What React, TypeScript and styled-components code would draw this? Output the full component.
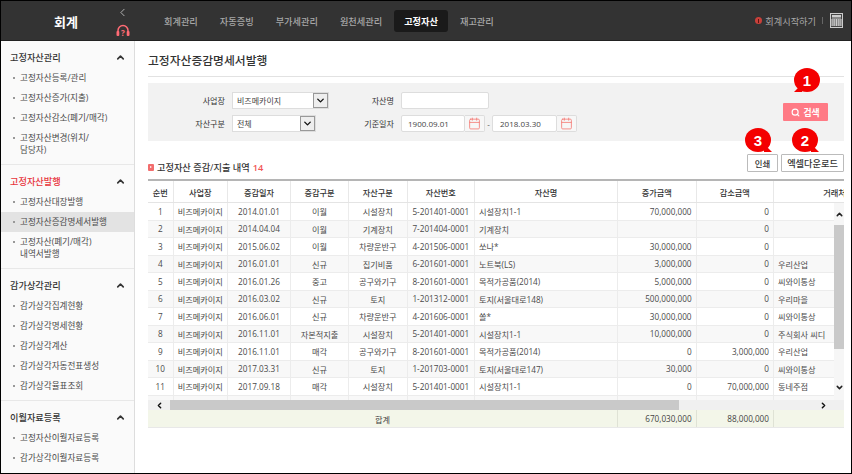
import React from 'react';
import styled, { createGlobalStyle } from 'styled-components';
import { Calendar, ChevronDown, ChevronLeft, ChevronRight, ChevronUp, Search } from 'lucide-react';

const FONT = '"Open Sans", "Noto Sans CJK KR", sans-serif';
const COLUMNS = '25.6px 54.4px 63px 58px 58.6px 67.4px 143px 78.6px 77.4px 122px';
const ROW_HEIGHT = 17.5;

const GlobalStyle = createGlobalStyle`
    html, body {
        margin: 0;
        padding: 0;
        overflow: hidden;
        background: #fff;
    }
    * {
        box-sizing: border-box;
    }
`;

const Frame = styled.div`
    width: 852px;
    height: 474px;
    border: 1px solid #000;
    display: flex;
    flex-direction: column;
    overflow: hidden;
    font-family: ${FONT};
    color: #444;
    background: #fff;
`;

const Header = styled.header`
    height: 40px;
    flex: none;
    display: flex;
    align-items: stretch;
    background: #333;
    border-bottom: 1px solid #222;
`;

const HeaderLeft = styled.div`
    width: 134px;
    flex: none;
    display: flex;
    align-items: center;
`;

const Logo = styled.div`
    width: 113px;
    padding: 0 0 0 53px;
    font-size: 13px;
    font-weight: 700;
    color: #fff;
    margin-top: 1px;
`;

const HeaderTools = styled.div`
    width: 17px;
    height: 100%;
    display: flex;
    flex-direction: column;
    align-items: center;
    justify-content: space-between;
    padding: 5px 0 3px;
    color: #ccc;
`;

const Nav = styled.nav`
    display: flex;
    align-items: center;
    gap: 2px;
    padding-left: 19px;
`;

const NavItem = styled.div<{ $active?: boolean }>`
    height: 22px;
    padding: 0 10px;
    display: flex;
    align-items: center;
    border-radius: 3px;
    font-size: 9.2px;
    font-weight: ${props => (props.$active ? 700 : 500)};
    color: ${props => (props.$active ? '#fff' : '#a8a8a8')};
    background: ${props => (props.$active ? '#1a1a1a' : 'transparent')};
`;

const HeaderRight = styled.div`
    margin-left: auto;
    display: flex;
    align-items: center;
    padding-right: 8px;
`;

const StartDot = styled.span`
    width: 7px;
    height: 7px;
    border-radius: 50%;
    background: #c9403a;
    display: flex;
    align-items: center;
    justify-content: center;
    margin-right: 3px;

    &::after {
        content: '';
        width: 1px;
        height: 4px;
        background: #5a1512;
    }
`;

const StartText = styled.span`
    font-size: 9.2px;
    color: #aaa;
`;

const HeaderDivider = styled.span`
    width: 1px;
    height: 7px;
    background: #666;
    margin: 0 7px 0 6px;
`;

const Body = styled.div`
    flex: 1;
    min-height: 0;
    display: flex;
`;

const Sidebar = styled.aside`
    width: 134px;
    flex: none;
    background: #fafafa;
    border-right: 1px solid #ddd;
`;

const SideSection = styled.section<{ $last?: boolean }>`
    padding-bottom: 4px;
    border-bottom: ${props => (props.$last ? 'none' : '1px solid #e8e8e8')};
`;

const SideHeading = styled.div<{ $active?: boolean }>`
    height: 27px;
    padding: 6px 8px 1px 9px;
    display: flex;
    align-items: center;
    justify-content: space-between;
    font-size: 9.2px;
    font-weight: 500;
    color: ${props => (props.$active ? '#e8343c' : '#333')};
`;

const SideItem = styled.div<{ $active?: boolean }>`
    position: relative;
    padding: 4px 10px 4px 19px;
    font-size: 8.6px;
    line-height: 12px;
    white-space: pre-line;
    color: #4a4a4a;
    background: ${props => (props.$active ? '#e3e3e3' : 'transparent')};

    &::before {
        content: '';
        position: absolute;
        left: 12px;
        top: 9px;
        width: 2px;
        height: 2px;
        background: #999;
    }
`;

const Main = styled.main`
    position: relative;
    flex: 1;
    min-width: 0;
    padding: 0 7px 0 13px;
`;

const PageTitle = styled.h1`
    margin: 0 0 6px;
    height: 36px;
    padding-top: 1px;
    display: flex;
    align-items: center;
    border-bottom: 1px solid #e2e2e2;
    font-size: 11.8px;
    font-weight: 500;
    color: #333;
`;

const SearchPanel = styled.form`
    height: 58px;
    padding: 9px 16px 20px 0;
    display: flex;
    justify-content: space-between;
    align-items: flex-end;
    background: #f2f2f2;
`;

const SearchGrid = styled.div`
    align-self: flex-start;
    display: grid;
    grid-template-columns: 77px 100px 55px auto;
    grid-auto-rows: 17px;
    gap: 6px 7px;
    align-items: center;
`;

const FieldLabel = styled.label`
    text-align: right;
    font-size: 8.1px;
    color: #333;
`;

const Select = styled.div<{ $width: number }>`
    width: ${props => props.$width}px;
    height: 17px;
    padding-left: 4px;
    display: flex;
    align-items: center;
    justify-content: space-between;
    font-size: 8px;
    color: #444;
    background: #fff;
    border: 1px solid #ddd;
`;

const SelectArrow = styled.span`
    width: 15px;
    height: 15px;
    display: flex;
    align-items: center;
    justify-content: center;
    color: #111;
    background: #eee;
    border: 1px solid #999;
`;

const TextField = styled.div<{ $width: number; $pad?: number }>`
    width: ${props => props.$width}px;
    height: 17px;
    padding-left: ${props => props.$pad ?? 6}px;
    display: flex;
    align-items: center;
    font-size: 8px;
    color: #444;
    background: #fff;
    border: 1px solid #ddd;
    border-radius: 2px;
`;

const DateRow = styled.div`
    display: flex;
    align-items: center;
`;

const CalendarButton = styled.span`
    width: 20px;
    height: 17px;
    display: flex;
    align-items: center;
    justify-content: center;
    color: #f47f7a;
    background: #f7f7f7;
    border: 1px solid #ddd;
    border-left: none;
    border-radius: 0 2px 2px 0;
`;

const DateDash = styled.span`
    width: 7px;
    text-align: center;
    font-size: 8px;
`;

const SearchButton = styled.button`
    width: 45px;
    height: 18px;
    padding: 0;
    display: flex;
    align-items: center;
    justify-content: center;
    gap: 3px;
    border: none;
    border-radius: 1px;
    font-family: ${FONT};
    font-size: 8.8px;
    font-weight: 700;
    color: #fff;
    background: #ff7a85;
`;

const Toolbar = styled.div`
    height: 18px;
    margin: 13px 0 7px;
    display: flex;
    align-items: flex-end;
    justify-content: space-between;
`;

const ListTitle = styled.div`
    display: flex;
    align-items: center;
    font-size: 9.2px;
    font-weight: 500;
    color: #333;
    margin-bottom: -2px;
`;

const ListMark = styled.span`
    width: 6px;
    height: 7px;
    margin-right: 3px;
    border-radius: 1px;
    background: #f26d6d;
    display: flex;
    align-items: center;
    justify-content: center;

    &::after {
        content: '';
        border-left: 2px solid #fff;
        border-top: 1.5px solid transparent;
        border-bottom: 1.5px solid transparent;
    }
`;

const ListCount = styled.span`
    margin-left: 3px;
    font-weight: 600;
    color: #f25555;
`;

const ToolButtons = styled.div`
    display: flex;
    gap: 3px;
`;

const ToolButton = styled.button<{ $width: number; $size: number }>`
    width: ${props => props.$width}px;
    height: 18px;
    padding: 0;
    font-family: ${FONT};
    font-size: ${props => props.$size}px;
    font-weight: 500;
    color: #333;
    background: #fff;
    border: 1px solid #bbb;
    border-radius: 1px;
`;

const TableFrame = styled.div`
    position: relative;
    overflow: hidden;
    border-top: 2px solid #b5b5b5;
    border-bottom: 1px solid #e8e8e8;
`;

const Row = styled.div`
    width: 770px;
    display: grid;
    grid-template-columns: ${COLUMNS};
`;

const HeadRow = styled(Row)`
    height: 22px;
    border-bottom: 1px solid #e4e4e4;
`;

const HeadCell = styled.div`
    display: flex;
    align-items: center;
    justify-content: center;
    font-size: 8.2px;
    font-weight: 500;
    color: #333;
    border-right: 1px solid #e8e8e8;
`;

const TableBody = styled.div`
    height: 197px;
    overflow: hidden;
`;

const DataRow = styled(Row)<{ $even: boolean }>`
    height: ${ROW_HEIGHT}px;
    background: ${props => (props.$even ? '#f8f8f8' : '#fff')};
    border-bottom: 1px solid #ececec;
`;

const Cell = styled.div<{ $align?: string }>`
    padding: 0 4px;
    display: flex;
    align-items: center;
    justify-content: ${props => props.$align || 'center'};
    white-space: nowrap;
    overflow: hidden;
    font-size: 8.2px;
    color: #4a4a4a;
    border-right: 1px solid #ececec;
`;

const HScroll = styled.div`
    height: 10px;
    padding-right: 10px;
    display: flex;
    align-items: center;
    color: #111;
    background: #f0f0f0;
`;

const ScrollEnd = styled.span`
    width: 22px;
    height: 100%;
    flex: none;
    display: flex;
    align-items: center;
    justify-content: center;
`;

const HThumb = styled.span`
    width: 509px;
    height: 100%;
    background: #c9c9c9;
`;

const HTrack = styled.span`
    flex: 1;
`;

const VScroll = styled.div`
    position: absolute;
    top: 22px;
    right: 0;
    width: 10px;
    height: 197px;
    display: flex;
    flex-direction: column;
    align-items: center;
    color: #222;
    background: #f6f6f6;
`;

const VEnd = styled.span<{ $height: number; $top?: number }>`
    height: ${props => props.$height}px;
    padding-top: ${props => props.$top ?? 0}px;
    flex: none;
    display: flex;
    align-items: center;
    justify-content: center;
`;

const VThumb = styled.span`
    width: 100%;
    height: 124px;
    flex: none;
    background: #c9c9c9;
`;

const FootRow = styled.div`
    width: 770px;
    height: 17px;
    display: grid;
    grid-template-columns: 470px 78.6px 77.4px 122px;
    background: #f3f6e9;
`;

const FootCell = styled(Cell)`
    color: #444;
    border-right: 1px solid #dfe2d5;
`;

const Badge = styled.span<{ $top: number; $left: number; $tail: 'left' | 'right' }>`
    position: absolute;
    top: ${props => props.$top}px;
    left: ${props => props.$left}px;
    width: 26px;
    height: 24px;
    display: flex;
    align-items: center;
    justify-content: center;
    border-radius: 50%;
    font-family: "Liberation Sans", sans-serif;
    font-size: 15px;
    font-weight: 700;
    color: #fff;
    background: #f40000;

    &::after {
        content: '';
        position: absolute;
        bottom: 0;
        ${props => (props.$tail === 'left' ? 'left: 0;' : 'right: -1px;')}
        width: 8px;
        height: 8px;
        background: #f40000;
        clip-path: ${props =>
            props.$tail === 'left'
                ? 'polygon(0 100%, 100% 0, 100% 100%)'
                : 'polygon(100% 100%, 0 0, 0 100%)'};
    }
`;

const HeadsetIcon = () => (
    <svg width="14" height="13" viewBox="0 0 14 13" fill="none">
        <path d="M2 8V6.5a5 5 0 0 1 10 0V8" stroke="#ff6b75" strokeWidth="1.5" />
        <rect x="0.5" y="7" width="2.8" height="5" rx="1" fill="#ff6b75" />
        <rect x="10.7" y="7" width="2.8" height="5" rx="1" fill="#ff6b75" />
        <text x="7" y="11.5" textAnchor="middle" fontSize="8" fontWeight="700" fill="#ff6b75">?</text>
    </svg>
);

const CalculatorIcon = () => (
    <svg width="13" height="15" viewBox="0 0 13 15" fill="none">
        <rect x="0.5" y="0.5" width="12" height="14" fill="#444" stroke="#ccc" />
        <rect x="2" y="2" width="9" height="2.5" fill="#ccc" />
        <path
            d="M2 6h9M2 8h9M2 10h9M2 12h9M2 6v7M4.2 6v7M6.5 6v7M8.8 6v7M11 6v7"
            stroke="#ccc"
            strokeWidth="1"
        />
    </svg>
);

const NAV = ['회계관리', '자동증빙', '부가세관리', '원천세관리', '고정자산', '재고관리'];

const SIDE_SECTIONS = [
    {
        title: '고정자산관리',
        items: ['고정자산등록/관리', '고정자산증가(지출)', '고정자산감소(폐기/매각)', '고정자산변경(위치/\n담당자)'],
    },
    {
        title: '고정자산발행',
        active: true,
        items: ['고정자산대장발행', '고정자산증감명세서발행', '고정자산(폐기/매각)\n내역서발행'],
    },
    {
        title: '감가상각관리',
        items: ['감가상각집계현황', '감가상각명세현황', '감가상각계산', '감가상각자동전표생성', '감가상각율표조회'],
    },
    {
        title: '이월자료등록',
        items: ['고정자산이월자료등록', '감가상각이월자료등록'],
    },
];

const HEADS = ['순번', '사업장', '증감일자', '증감구분', '자산구분', '자산번호', '자산명', '증가금액', '감소금액', '거래처'];

const ROWS = [
    ['2014.01.01', '이월', '시설장치', '5-201401-0001', '시설장치1-1', '70,000,000', '0', ''],
    ['2014.04.04', '이월', '기계장치', '7-201404-0001', '기계장치', '', '0', ''],
    ['2015.06.02', '이월', '차량운반구', '4-201506-0001', '쏘나*', '30,000,000', '0', ''],
    ['2016.01.01', '신규', '집기비품', '6-201601-0001', '노트북(LS)', '3,000,000', '0', '우리산업'],
    ['2016.01.26', '중고', '공구와기구', '8-201601-0001', '목적가공품(2014)', '5,000,000', '0', '씨와이통상'],
    ['2016.03.02', '신규', '토지', '1-201312-0001', '토지(서울대로148)', '500,000,000', '0', '우리마을'],
    ['2016.06.01', '신규', '차량운반구', '4-201606-0001', '쏠*', '30,000,000', '0', '씨와이통상'],
    ['2016.11.01', '자본적지출', '시설장치', '5-201401-0001', '시설장치1-1', '10,000,000', '0', '주식회사 씨디'],
    ['2016.11.01', '매각', '공구와기구', '8-201601-0001', '목적가공품(2014)', '0', '3,000,000', '우리산업'],
    ['2017.03.31', '신규', '토지', '1-201703-0001', '토지(서울대로147)', '30,000', '0', '씨와이통상'],
    ['2017.09.18', '매각', '시설장치', '5-201401-0001', '시설장치1-1', '0', '70,000,000', '동네주점'],
    ['2017.10.11', '신규', '차량운반구', '4-201710-0001', '쏘렌*', '30,000', '0', '우리산업'],
];

const App = () => (
    <Frame>
        <GlobalStyle />
        <Header>
            <HeaderLeft>
                <Logo>회계</Logo>
                <HeaderTools>
                    <ChevronLeft size={13} strokeWidth={1.5} />
                    <HeadsetIcon />
                </HeaderTools>
            </HeaderLeft>
            <Nav>
                {NAV.map(name => (
                    <NavItem key={name} $active={name === '고정자산'}>
                        {name}
                    </NavItem>
                ))}
            </Nav>
            <HeaderRight>
                <StartDot />
                <StartText>회계시작하기</StartText>
                <HeaderDivider />
                <CalculatorIcon />
            </HeaderRight>
        </Header>
        <Body>
            <Sidebar>
                {SIDE_SECTIONS.map((section, i) => (
                    <SideSection key={section.title} $last={i === SIDE_SECTIONS.length - 1}>
                        <SideHeading $active={section.active}>
                            {section.title}
                            <ChevronUp size={11} strokeWidth={3.5} color="#333" />
                        </SideHeading>
                        {section.items.map(item => (
                            <SideItem key={item} $active={item === '고정자산증감명세서발행'}>
                                {item}
                            </SideItem>
                        ))}
                    </SideSection>
                ))}
            </Sidebar>
            <Main>
                <PageTitle>고정자산증감명세서발행</PageTitle>
                <SearchPanel>
                    <SearchGrid>
                        <FieldLabel>사업장</FieldLabel>
                        <Select $width={97}>
                            비즈메카이지
                            <SelectArrow>
                                <ChevronDown size={11} strokeWidth={3} />
                            </SelectArrow>
                        </Select>
                        <FieldLabel>자산명</FieldLabel>
                        <TextField $width={88} />
                        <FieldLabel>자산구분</FieldLabel>
                        <Select $width={84}>
                            전체
                            <SelectArrow>
                                <ChevronDown size={11} strokeWidth={3} />
                            </SelectArrow>
                        </Select>
                        <FieldLabel>기준일자</FieldLabel>
                        <DateRow>
                            <TextField $width={64}>1900.09.01</TextField>
                            <CalendarButton>
                                <Calendar size={13} strokeWidth={1.6} />
                            </CalendarButton>
                            <DateDash>-</DateDash>
                            <TextField $width={65} $pad={7}>2018.03.30</TextField>
                            <CalendarButton>
                                <Calendar size={13} strokeWidth={1.6} />
                            </CalendarButton>
                        </DateRow>
                    </SearchGrid>
                    <SearchButton type="button">
                        <Search size={9} strokeWidth={3} />
                        검색
                    </SearchButton>
                </SearchPanel>
                <Toolbar>
                    <ListTitle>
                        <ListMark />
                        고정자산 증감/지출 내역
                        <ListCount>14</ListCount>
                    </ListTitle>
                    <ToolButtons>
                        <ToolButton type="button" $width={31} $size={8.4}>인쇄</ToolButton>
                        <ToolButton type="button" $width={63} $size={9.2}>엑셀다운로드</ToolButton>
                    </ToolButtons>
                </Toolbar>
                <TableFrame>
                    <HeadRow>
                        {HEADS.map(head => (
                            <HeadCell key={head}>{head}</HeadCell>
                        ))}
                    </HeadRow>
                    <TableBody>
                        {ROWS.map((row, i) => (
                            <DataRow key={i} $even={i % 2 === 1}>
                                <Cell>{i + 1}</Cell>
                                <Cell>비즈메카이지</Cell>
                                <Cell>{row[0]}</Cell>
                                <Cell>{row[1]}</Cell>
                                <Cell>{row[2]}</Cell>
                                <Cell>{row[3]}</Cell>
                                <Cell $align="flex-start">{row[4]}</Cell>
                                <Cell $align="flex-end">{row[5]}</Cell>
                                <Cell $align="flex-end">{row[6]}</Cell>
                                <Cell $align="flex-start">{row[7]}</Cell>
                            </DataRow>
                        ))}
                    </TableBody>
                    <HScroll>
                        <ScrollEnd>
                            <ChevronLeft size={9} strokeWidth={4} />
                        </ScrollEnd>
                        <HThumb />
                        <HTrack />
                        <ScrollEnd>
                            <ChevronRight size={9} strokeWidth={4} />
                        </ScrollEnd>
                    </HScroll>
                    <FootRow>
                        <FootCell>합계</FootCell>
                        <FootCell $align="flex-end">670,030,000</FootCell>
                        <FootCell $align="flex-end">88,000,000</FootCell>
                        <FootCell />
                    </FootRow>
                    <VScroll>
                        <VEnd $height={22}>
                            <ChevronUp size={9} strokeWidth={4} />
                        </VEnd>
                        <VThumb />
                        <VEnd $height={51} $top={26}>
                            <ChevronDown size={9} strokeWidth={4} />
                        </VEnd>
                    </VScroll>
                </TableFrame>
                <Badge $top={27} $left={659} $tail="left">1</Badge>
                <Badge $top={87} $left={657} $tail="right">2</Badge>
                <Badge $top={87} $left={610} $tail="right">3</Badge>
            </Main>
        </Body>
    </Frame>
);

export default App;
